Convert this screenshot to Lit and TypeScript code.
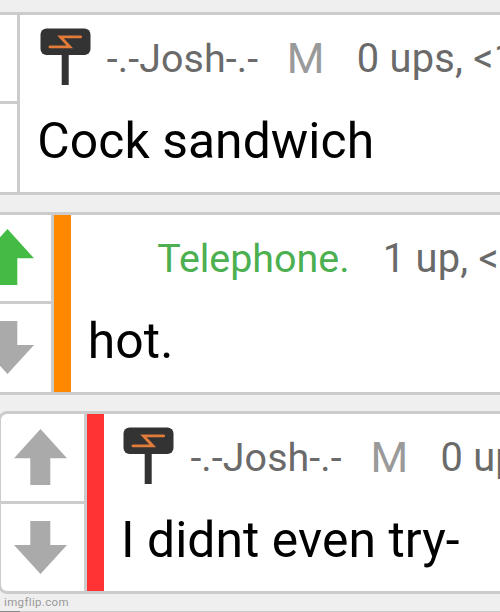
import { LitElement, html, css, svg, nothing } from "lit";
import { customElement, property } from "lit/decorators.js";

@customElement("vote-arrow")
class VoteArrow extends LitElement {
  @property() direction = "up";
  @property({ type: Boolean }) active = false;

  static styles = css`
    :host { display: block; height: 56px; }
    svg { display: block; fill: #aaa; }
    .active { fill: #44bb44; }
  `;

  render() {
    const d =
      this.direction === "up"
        ? "M26.5 0L53 29.3H36.3V56H16.3V29.3H0Z"
        : "M16.3 0H36.3V24H53L26.5 53L0 24H16.3Z";
    return html`<svg class=${this.active ? "active" : ""} width="53" height="56" viewBox="0 0 53 56">
      ${svg`<path d=${d} />`}
    </svg>`;
  }
}

@customElement("sign-icon")
class SignIcon extends LitElement {
  static styles = css`
    :host { display: block; }
    svg { display: block; }
  `;
  render() {
    return html`<svg width="51" height="58" viewBox="0 0 51 58">
      <rect x="21.7" y="20" width="7" height="37" fill="#333" />
      <rect x="0.5" y="0.5" width="50" height="26.5" rx="6" fill="#333" />
      <path d="M40.6 8.9H20.5L29.8 18.9H10" fill="none" stroke="#e07b39" stroke-width="2.9"
        stroke-linecap="round" stroke-linejoin="miter" stroke-miterlimit="3" />
    </svg>`;
  }
}

@customElement("comment-card")
class CommentCard extends LitElement {
  @property() name = "";
  @property() ups = "";
  @property() text = "";
  @property() accent = "";
  @property({ type: Boolean }) moderator = false;
  @property({ type: Boolean }) upvoted = false;

  static styles = css`
    :host {
      display: flex;
      box-sizing: border-box;
      width: 900px;
      height: 183px;
      border: 3px solid #ccc;
      border-radius: 9px;
      background: #fff;
      overflow: hidden;
      white-space: nowrap;
      font-family: Roboto, sans-serif;
    }
    .votes {
      flex: none;
      display: grid;
      grid-template-rows: var(--half, 86px) 3px 88px;
      width: 83px;
      border-right: 3px solid #ccc;
    }
    .up { padding: calc(var(--half, 86px) - 72px) 0 0 13.3px; }
    .down { padding: 17px 0 0 13.3px; }
    .rule { background: #ccc; }
    .accent { flex: none; width: 17px; }
    .orange { background: #ff8800; }
    .red { background: #ff3333; }
    .content { padding-left: 17.3px; }
    .head {
      display: flex;
      height: 86px;
      color: #6a6a6a;
      font-size: 39.4px;
      line-height: 87px;
    }
    .icon { width: 69.5px; padding: 13px 0 0 2.5px; box-sizing: border-box; }
    .name { width: 180px; letter-spacing: 0.08px; }
    .green { width: 225.5px; color: #4caf50; letter-spacing: 0; }
    .mod { width: 70px; color: #9a9a9a; font-size: 43.2px; }
    .ups { font-size: 39.8px; letter-spacing: 0.25px; }
    .text {
      color: #000;
      font-size: 49.8px;
      line-height: 60px;
      padding-top: 10px;
      letter-spacing: 0.08px;
    }
  `;

  render() {
    return html`
      <div class="votes">
        <div class="up"><vote-arrow direction="up" ?active=${this.upvoted}></vote-arrow></div>
        <div class="rule"></div>
        <div class="down"><vote-arrow direction="down"></vote-arrow></div>
      </div>
      ${this.accent ? html`<div class="accent ${this.accent}"></div>` : nothing}
      <div class="content">
        <div class="head">
          <div class="icon">${this.moderator ? html`<sign-icon></sign-icon>` : nothing}</div>
          <span class="name ${this.upvoted ? "green" : ""}">${this.name}</span>
          ${this.moderator ? html`<span class="mod">M</span>` : nothing}
          <span class="ups">${this.ups}</span>
        </div>
        <div class="text">${this.text}</div>
      </div>
    `;
  }
}

@customElement("app-root")
class AppRoot extends LitElement {
  static styles = css`
    :host {
      display: flex;
      flex-direction: column;
      box-sizing: border-box;
      width: 500px;
      height: 612px;
      padding-top: 12px;
      background: #efefef;
      overflow: hidden;
    }
    comment-card { flex: none; margin-bottom: 17px; margin-left: -69px; }
    .reply { margin-left: -35.5px; margin-bottom: 16px; }
    .nested { margin-left: -2.4px; margin-bottom: 0; --half: 87px; }
    .footer {
      flex: 1;
      padding-left: 4px;
      font: 11.5px/17px Roboto, sans-serif;
      letter-spacing: 0.35px;
      color: #999;
    }
    .edge { flex: none; height: 1px; background: linear-gradient(90deg, #888 20px, #ccc 20px); }
  `;

  render() {
    return html`
      <comment-card name="-.-Josh-.-" ups="0 ups, <1" text="Cock sandwich" moderator></comment-card>
      <comment-card class="reply" name="Telephone." ups="1 up, <" text="hot." accent="orange" upvoted></comment-card>
      <comment-card class="nested" name="-.-Josh-.-" ups="0 up" text="I didnt even try-" accent="red" moderator></comment-card>
      <div class="footer">imgflip.com</div>
      <div class="edge"></div>
    `;
  }
}
